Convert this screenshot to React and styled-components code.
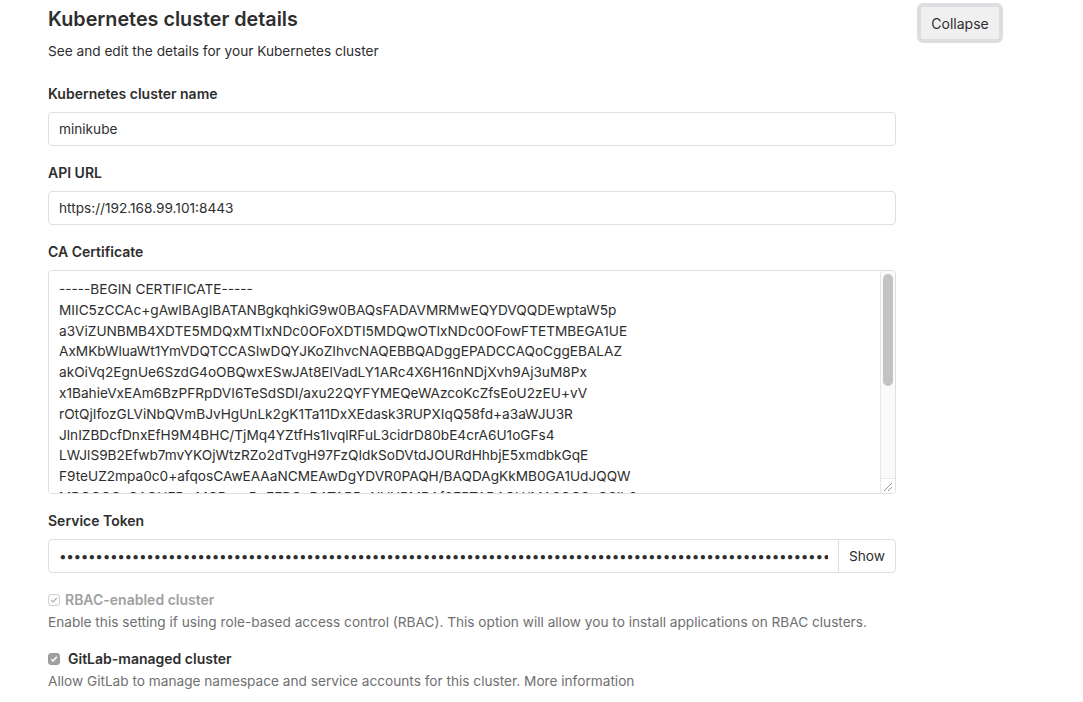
import React from "react";
import styled, { createGlobalStyle } from "styled-components";

const GlobalStyle = createGlobalStyle`
  body {
    margin: 0;
    background: #fff;
    color: #2e2e2e;
    font-family: Inter, "Liberation Sans", sans-serif;
    font-size: 13.65px;
  }
`;

const certificate = [
  "-----BEGIN CERTIFICATE-----",
  "MIIC5zCCAc+gAwIBAgIBATANBgkqhkiG9w0BAQsFADAVMRMwEQYDVQQDEwptaW5p",
  "a3ViZUNBMB4XDTE5MDQxMTIxNDc0OFoXDTI5MDQwOTIxNDc0OFowFTETMBEGA1UE",
  "AxMKbWluaWt1YmVDQTCCASIwDQYJKoZIhvcNAQEBBQADggEPADCCAQoCggEBALAZ",
  "akOiVq2EgnUe6SzdG4oOBQwxESwJAt8ElVadLY1ARc4X6H16nNDjXvh9Aj3uM8Px",
  "x1BahieVxEAm6BzPFRpDVI6TeSdSDI/axu22QYFYMEQeWAzcoKcZfsEoU2zEU+vV",
  "rOtQjIfozGLViNbQVmBJvHgUnLk2gK1Ta11DxXEdask3RUPXIqQ58fd+a3aWJU3R",
  "JlnIZBDcfDnxEfH9M4BHC/TjMq4YZtfHs1IvqlRFuL3cidrD80bE4crA6U1oGFs4",
  "LWJlS9B2Efwb7mvYKOjWtzRZo2dTvgH97FzQIdkSoDVtdJOURdHhbjE5xmdbkGqE",
  "F9teUZ2mpa0c0+afqosCAwEAAaNCMEAwDgYDVR0PAQH/BAQDAgKkMB0GA1UdJQQW",
  "MBQGCCsGAQUFBwMCBggrBgEFBQcDATAPBgNVHRMBAf8EBTADAQH/MA0GCSqGSIb3",
  "DQEBCwUAA4IBAQBNK8bRHIqaKe1F3jKBQfWr9qTHYD2dlBsGj5wH4uJvNp8aLQe1",
  "Vx3kTgP0mZcR7nqHbL2sYwUfAe9dKj4oCtIr6BvXhN1lMpGz8QyW5uSaEoD3iFkJ",
  "c7TqLr2Yh9WnMbU0vXgK4dPzAs6eRjF1oIHmNw8lCkSy3QtBuEG5aVxZpJ9Di2Ob",
  "n4Ue0GqWf7LhK1zPsRcVt3mYjXb8AoN6dIwTk2QgHlEu9SJvMrZy5aBFpCe1xD7o",
  "Ks3WgNq8tLh0YvP2mEbJc6RfUi4zOaXdG9kHn1TwA5lQjMrZ7yBeS3pVuC8xIoFt",
  "hG2kPd9Lw4Ex",
  "-----END CERTIFICATE-----",
].join("\n");

const token = "x".repeat(240);

function App() {
  return (
    <>
      <GlobalStyle />
      <Page>
        <Main>
          <Title>Kubernetes cluster details</Title>
          <Subtitle>See and edit the details for your Kubernetes cluster</Subtitle>

          <FormGroup>
            <Label htmlFor="cluster-name">Kubernetes cluster name</Label>
            <TextInput id="cluster-name" type="text" defaultValue="minikube" />
          </FormGroup>

          <FormGroup>
            <Label htmlFor="api-url">API URL</Label>
            <TextInput
              id="api-url"
              type="text"
              defaultValue="https://192.168.99.101:8443"
            />
          </FormGroup>

          <FormGroup>
            <Label htmlFor="ca-cert">CA Certificate</Label>
            <CertBox>
              <CertArea id="ca-cert" defaultValue={certificate} />
              <ScrollTrack>
                <ScrollThumb />
                <Resizer>
                  <svg width="14" height="14" viewBox="0 0 14 14">
                    <path d="M3 12 L11 4 M7 12 L11 8" stroke="#8a8a8a" strokeWidth="0.9" />
                  </svg>
                </Resizer>
              </ScrollTrack>
            </CertBox>
          </FormGroup>

          <FormGroup>
            <Label htmlFor="token">Service Token</Label>
            <InputGroup>
              <TokenInput id="token" type="password" defaultValue={token} readOnly />
              <AppendButton type="button">Show</AppendButton>
            </InputGroup>
          </FormGroup>

          <CheckGroup>
            <CheckLabel $disabled $gap={5}>
              <CheckBox $disabled>
                <svg width="8" height="8" viewBox="0 0 8 8">
                  <path d="M1.3 4.2 L3.1 6 L6.8 1.8" fill="none" stroke="#a9a9a9" strokeWidth="1.1" />
                </svg>
              </CheckBox>
              RBAC-enabled cluster
            </CheckLabel>
            <HelpText>
              Enable this setting if using role-based access control (RBAC). This
              option will allow you to install applications on RBAC clusters.
            </HelpText>
          </CheckGroup>

          <CheckGroup>
            <CheckLabel $gap={8}>
              <CheckBox>
                <svg width="8" height="8" viewBox="0 0 8 8">
                  <path d="M1.3 4.2 L3.1 6 L6.8 1.8" fill="none" stroke="#fff" strokeWidth="1.4" />
                </svg>
              </CheckBox>
              GitLab-managed cluster
            </CheckLabel>
            <HelpText>
              Allow GitLab to manage namespace and service accounts for this
              cluster. <HelpLink href="#">More information</HelpLink>
            </HelpText>
          </CheckGroup>
        </Main>

        <CollapseButton type="button">Collapse</CollapseButton>
      </Page>
    </>
  );
}

const Page = styled.div`
  display: flex;
  align-items: flex-start;
  gap: 21px;
  padding-left: 48px;
`;

const Main = styled.main`
  width: 848px;
`;

const Title = styled.h4`
  margin: 7px 0 0;
  font-size: 19.75px;
  line-height: 24px;
  font-weight: 600;
  color: #2e2e2e;
`;

const Subtitle = styled.p`
  margin: 10px 0 23px;
  line-height: 20px;
`;

const FormGroup = styled.div`
  margin-bottom: 17px;
`;

const Label = styled.label`
  display: block;
  margin-bottom: 8px;
  font-size: 14px;
  line-height: 20px;
  font-weight: 600;
`;

const TextInput = styled.input`
  display: block;
  box-sizing: border-box;
  width: 100%;
  height: 34px;
  padding: 0 10px;
  border: 1px solid #dfdfdf;
  border-radius: 4px;
  font: inherit;
  color: #2e2e2e;
  outline: none;
`;

const CertBox = styled.div`
  display: flex;
  box-sizing: border-box;
  height: 224px;
  border: 1px solid #dfdfdf;
  border-radius: 4px;
  overflow: hidden;
`;

const CertArea = styled.textarea`
  flex: 1;
  padding: 8px 10px;
  border: none;
  font: inherit;
  line-height: 20.8px;
  color: #2e2e2e;
  white-space: pre;
  overflow: hidden;
  resize: none;
  outline: none;
`;

const ScrollTrack = styled.div`
  display: flex;
  flex-direction: column;
  width: 14px;
  background: #fafafa;
  border-left: 1px solid #e6e6e6;
`;

const ScrollThumb = styled.div`
  height: 112px;
  margin: 3px 2px 0;
  border-radius: 5px;
  background: #c3c3c3;
`;

const Resizer = styled.div`
  display: flex;
  margin-top: auto;
  height: 14px;
  border-top: 1px solid #e6e6e6;
  background: #fff;
`;

const InputGroup = styled.div`
  display: flex;
`;

const TokenInput = styled(TextInput)`
  flex: 1;
  border-radius: 4px 0 0 4px;
  letter-spacing: -0.4px;
`;

const AppendButton = styled.button`
  width: 58px;
  margin-left: -1px;
  border: 1px solid #dfdfdf;
  border-radius: 0 4px 4px 0;
  background: #fff;
  font: inherit;
  color: #2e2e2e;
`;

const CheckGroup = styled.div`
  margin-bottom: 17px;
`;

const CheckLabel = styled.label`
  display: flex;
  align-items: center;
  gap: ${(p) => p.$gap}px;
  font-size: 14px;
  line-height: 20px;
  font-weight: 600;
  color: ${(p) => (p.$disabled ? "#a0a0a0" : "#2e2e2e")};
`;

const CheckBox = styled.span`
  display: inline-flex;
  align-items: center;
  justify-content: center;
  box-sizing: border-box;
  width: 12px;
  height: 12px;
  border-radius: 3px;
  border: 1px solid ${(p) => (p.$disabled ? "#d2d2d2" : "#9a9a9a")};
  background: ${(p) => (p.$disabled ? "#fbfbfb" : "#a0a0a0")};
`;

const HelpText = styled.p`
  margin: 2px 0 0;
  line-height: 20px;
  color: #707070;
`;

const HelpLink = styled.a`
  color: #707070;
  text-decoration: none;
`;

const CollapseButton = styled.button`
  margin-top: 3px;
  width: 86px;
  height: 40px;
  border: 4px solid #dcdde0;
  border-radius: 6px;
  background: #f0f0f0;
  font: inherit;
  font-size: 14px;
  color: #2e2e2e;
  outline: none;
`;

export default App;
